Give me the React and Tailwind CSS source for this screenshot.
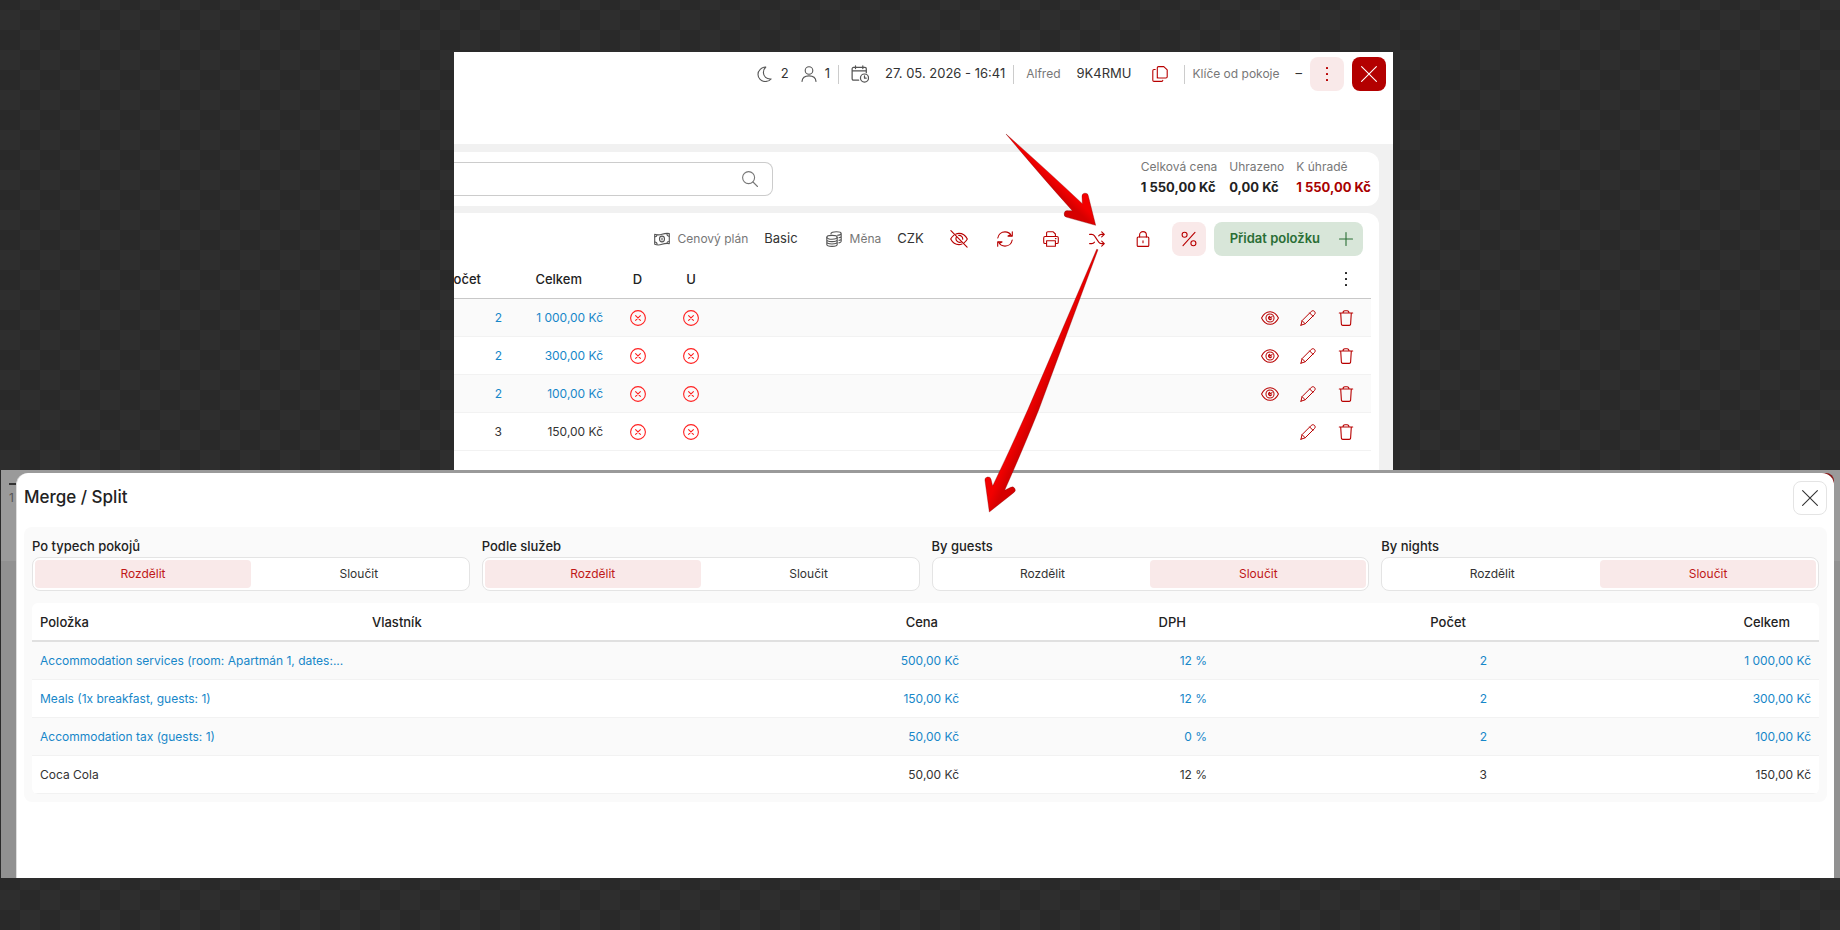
import React, { useState } from 'react';

const Icon = ({ size = 16, className = '', width = 1.1, children }) => (
  <svg
    width={size}
    height={size}
    viewBox="0 0 16 16"
    fill="none"
    stroke="currentColor"
    strokeWidth={width}
    strokeLinecap="round"
    strokeLinejoin="round"
    className={`shrink-0 ${className}`}
    aria-hidden="true"
  >
    {children}
  </svg>
);

const MoonIcon = () => (
  <Icon className="text-[#555]">
    <path d="M8.8 1C4.4 1.3 1 4.4 1 8.4c0 4 3.2 7.1 7.1 7.1 2.5 0 4.7-.8 6-2.5C9.500 13.400 6.400 10.600 6.400 6.600 6.400 4.300 7.300 2.300 8.800 1Z" />
  </Icon>
);

const UserIcon = () => (
  <Icon className="text-[#555]">
    <circle cx="8" cy="4.500" r="3.800" />
    <path d="M1 15.400C1.300 11.600 4 9.900 8 9.900s6.700 1.700 7 5.500" />
  </Icon>
);

const CalendarIcon = () => (
  <Icon size={18} className="text-[#555]">
    <path d="M4 .8v2.400M10.500 .8v2.400M6.800 13.500H2.200C1.500 13.500 1 13 1 12.300V3.400c0-.7.5-1.200 1.200-1.200h10.200c.7 0 1.200.5 1.200 1.200v3.400M1 5.300h12.600" />
    <circle cx="12" cy="11.600" r="3.600" />
    <path d="M12 9.700v2h1.500" />
  </Icon>
);

const CopyIcon = () => (
  <Icon>
    <path d="M5.300 12V1.800C5.300 1.100 5.900.6 6.500.6h5.300l3.400 3.300V10.800c0 .7-.5 1.200-1.200 1.200H6.500C5.900 12 5.300 11.500 5.300 10.800" />
    <path d="M3.200 3.500H2C1.300 3.500.8 4 .8 4.700v9.500c0 .7.5 1.200 1.200 1.200h7.600c.7 0 1.200-.5 1.200-1.200" />
  </Icon>
);

const DotsIcon = () => (
  <Icon>
    <g fill="currentColor" stroke="none">
      <rect x="7" y="1" width="2" height="2" rx=".5" />
      <rect x="7" y="7" width="2" height="2" rx=".5" />
      <rect x="7" y="13" width="2" height="2" rx=".5" />
    </g>
  </Icon>
);

const CloseIcon = () => (
  <Icon>
    <path d="M.6.6l14.800 14.800M15.400.6.6 15.400" />
  </Icon>
);

const SearchIcon = () => (
  <Icon className="text-[#777]">
    <circle cx="6.600" cy="6.600" r="6" />
    <path d="m11 11 4.500 4.500" />
  </Icon>
);

const MoneyIcon = () => (
  <Icon className="text-[#555]">
    <path d="M.7 3.300c2.700.9 4.900.8 7.300 0s4.600-1.300 7.300-.7v10c-2.700-.6-4.900-.1-7.300.7s-4.600 1-7.300 0v-10Z" />
    <ellipse cx="8" cy="8" rx="2.500" ry="2.900" />
    <path d="M8 7v2M.8 5.800c1.300.1 2.100-.7 2.200-1.900M15.200 5.200c-1.200.2-2.200-.8-2.300-2.300M.8 11c1.300 0 2.200.9 2.300 2.300M15.200 10.300c-1.200 0-2.200.8-2.300 2" />
  </Icon>
);

const CoinsIcon = () => (
  <Icon className="text-[#555]">
    <ellipse cx="6" cy="6.300" rx="5.200" ry="1.900" />
    <path d="M.8 6.300v7.200c0 1 2.300 1.900 5.200 1.900s5.200-.9 5.200-1.900V6.300M.8 8.700c0 1 2.300 1.900 5.200 1.900s5.200-.9 5.200-1.900M.8 11.100c0 1 2.300 1.900 5.200 1.900s5.200-.9 5.200-1.900M5 2.600C5 1.500 7.300.7 10.200.7s5 .8 5 1.800v7.700c0 .8-1 1.400-2.300 1.700M5 2.600v.4M11.500 4.300c1.900-.2 3.400-.8 3.700-1.800M13 6.800c1.300-.3 2.200-.8 2.200-1.500M13 9.400c1.300-.3 2.200-.8 2.200-1.500" />
  </Icon>
);

const EyeOffIcon = () => (
  <Icon size={18} width={1}>
    <path d="M.8.6l14.400 14.600M5.300 3.600C6.100 3.200 7 3 8 3c3.600 0 6.200 2.700 7.400 5-.6 1.100-1.500 2.300-2.700 3.200M10.600 12.500c-.8.300-1.700.5-2.600.5-3.600 0-6.200-2.700-7.400-5 .6-1.100 1.500-2.300 2.700-3.200M6 5.800a3.200 3.200 0 0 0 4.300 4.600M7.800 4.800a3.200 3.200 0 0 1 3.500 3.400" />
  </Icon>
);

const RefreshIcon = () => (
  <Icon>
    <path d="M.8 7C1.300 3.400 4.300.9 8 .9c2.800 0 5.200 1.500 6.400 3.800M15.200 9c-.5 3.600-3.500 6.100-7.200 6.100-2.800 0-5.200-1.500-6.400-3.800" />
    <path d="M15.300.8v4.300H11l2.400-1.300M.7 15.200v-4.300H5l-2.400 1.300" />
  </Icon>
);

const PrinterIcon = () => (
  <Icon>
    <path d="M3.600 5.500V2c0-.7.500-1.200 1.200-1.200h5.400L12.400 3v2.500M3.600 12.500H2c-.7 0-1.300-.5-1.300-1.300V6.900c0-.8.600-1.400 1.300-1.400h12c.7 0 1.300.6 1.300 1.400v4.300c0 .8-.6 1.300-1.300 1.300h-1.600M3.600 9.700h8.800v5.600H3.600ZM12.400 7.600h.6" />
  </Icon>
);

const ShuffleIcon = () => (
  <Icon>
    <path d="M.6 3.400h2.100c1.300 0 2.100.5 2.800 1.500l4.200 6.200c.7 1 1.500 1.500 2.800 1.500h2.700M.6 12.600h2.100c1.300 0 2.100-.5 2.800-1.500M9.700 4.900c.7-1 1.500-1.500 2.800-1.500h2.700M12.700.9l2.600 2.500-2.600 2.500M12.700 10.100l2.600 2.500-2.600 2.500" />
  </Icon>
);

const LockIcon = () => (
  <Icon>
    <rect x="2.200" y="6" width="11.600" height="9.400" rx="1" />
    <path d="M4.600 6V4c0-1.900 1.500-3.400 3.400-3.400s3.400 1.500 3.400 3.400v2M8 9.700v2" />
  </Icon>
);

const PercentIcon = () => (
  <Icon>
    <circle cx="3.600" cy="3.800" r="2.500" />
    <circle cx="12.400" cy="12.200" r="2.500" />
    <path d="M14 1.400 2 14.600" />
  </Icon>
);

const PlusIcon = () => (
  <Icon>
    <path d="M8 1.500v13M1.500 8h13" />
  </Icon>
);

const EyeIcon = () => (
  <Icon size={18} width={0.9}>
    <path d="M.5 8C1.900 5 4.700 2.400 8 2.400S14.100 5 15.500 8c-1.400 3-4.200 5.600-7.500 5.600S1.900 11 .5 8Z" />
    <circle cx="8" cy="8" r="3.600" />
    <path d="M9.800 6.800 7.800 8.200V6.500a1.500 1.500 0 1 0 1.700 2.200" />
  </Icon>
);

const PencilIcon = () => (
  <Icon width={1}>
    <path d="M1 15.200l1-4.500L11.300 1.400c.9-.9 2.300-.9 3.200 0 .9.900.9 2.200 0 3.100L5.200 13.800 1 15.200ZM9.700 3l3.200 3.200M2.200 10.800l3 3" />
  </Icon>
);

const TrashIcon = () => (
  <Icon>
    <path d="M1.300 3h13.400M5 3c0-1.400.8-2.300 1.900-2.300h2.200C10.200.7 11 1.600 11 3M2.700 3l.7 11.200c.1.700.6 1.200 1.300 1.200h6.600c.7 0 1.200-.5 1.300-1.200L13.300 3" />
  </Icon>
);

const CrossCircleIcon = () => (
  <Icon className="mx-auto text-[#ff2020]">
    <circle cx="8" cy="8" r="7.400" />
    <path d="m5.600 5.600 4.800 4.800M10.400 5.600l-4.800 4.800" />
  </Icon>
);

const IconButton = ({ label, className = '', children }) => (
  <button
    aria-label={label}
    className={`flex size-[34px] shrink-0 items-center justify-center rounded-lg ${className}`}
  >
    {children}
  </button>
);

const items = [
  { name: 'Accommodation services (room: Apartmán 1, dates:...', price: '500,00 Kč', vat: '12 %', count: 2, total: '1 000,00 Kč', system: true },
  { name: 'Meals (1x breakfast, guests: 1)', price: '150,00 Kč', vat: '12 %', count: 2, total: '300,00 Kč', system: true },
  { name: 'Accommodation tax (guests: 1)', price: '50,00 Kč', vat: '0 %', count: 2, total: '100,00 Kč', system: true },
  { name: 'Coca Cola', price: '50,00 Kč', vat: '12 %', count: 3, total: '150,00 Kč', system: false },
];

const totals = [
  { label: 'Celková cena', value: '1 550,00 Kč', color: 'text-[#222]' },
  { label: 'Uhrazeno', value: '0,00 Kč', color: 'text-[#222]' },
  { label: 'K úhradě', value: '1 550,00 Kč', color: 'text-[#a80000]' },
];

const Divider = () => <span className="h-[19px] w-px bg-[#ccc]" />;

const ReservationHeader = () => (
  <header className="flex h-[92px] items-start justify-end bg-white pt-[5px] pr-[7px]">
    <div className="flex h-[34px] items-center text-[13px] text-[#333]">
      <MoonIcon />
      <span className="ml-2">2</span>
      <span className="ml-3 flex items-center gap-2"><UserIcon />1</span>
      <span className="ml-2 flex"><Divider /></span>
      <span className="ml-3 flex items-center gap-4"><CalendarIcon />27. 05. 2026 - 16:41</span>
      <span className="ml-2 flex"><Divider /></span>
      <span className="ml-3 text-xs text-[#777]">Alfred</span>
      <span className="ml-4">9K4RMU</span>
      <button aria-label="Kopírovat" className="mr-4 ml-5 text-[#b80000]"><CopyIcon /></button>
      <Divider />
      <span className="ml-2 text-xs text-[#777]">Klíče od pokoje</span>
      <span className="mr-2 ml-4">–</span>
    </div>
    <IconButton label="Více" className="bg-[#f9e9e9] text-[#b80000]"><DotsIcon /></IconButton>
    <IconButton label="Zavřít" className="ml-2 bg-[#b30000] text-white"><CloseIcon /></IconButton>
  </header>
);

const SummaryBar = () => (
  <div className="flex h-[54px] items-start justify-between rounded-r-xl bg-white pr-2">
    <label className="mt-[10px] flex h-[34px] w-[319px] items-center rounded-r-lg border border-l-0 border-[#ccc] pr-[14px]">
      <input type="search" aria-label="Hledat" className="min-w-0 flex-1 bg-transparent text-[13px] outline-none" />
      <SearchIcon />
    </label>
    <dl className="mt-[5px] flex gap-3">
      {totals.map((total) => (
        <div key={total.label}>
          <dt className="text-xs leading-5 text-[#777]">{total.label}</dt>
          <dd className={`text-[13px] leading-5 font-bold ${total.color}`}>{total.value}</dd>
        </div>
      ))}
    </dl>
  </div>
);

const Toolbar = () => (
  <div className="flex items-center justify-end pr-4 text-[13px] text-[#333]">
    <MoneyIcon />
    <span className="ml-2 text-xs text-[#777]">Cenový plán</span>
    <span className="ml-4">Basic</span>
    <span className="ml-7 flex"><CoinsIcon /></span>
    <span className="ml-2 text-xs text-[#777]">Měna</span>
    <span className="ml-4">CZK</span>
    <div className="ml-[18px] flex gap-3 text-[#b80000]">
      <IconButton label="Skrýt"><EyeOffIcon /></IconButton>
      <IconButton label="Obnovit"><RefreshIcon /></IconButton>
      <IconButton label="Tisk"><PrinterIcon /></IconButton>
      <IconButton label="Sloučit / rozdělit"><ShuffleIcon /></IconButton>
      <IconButton label="Zamknout"><LockIcon /></IconButton>
      <IconButton label="Sleva" className="bg-[#f9e9e9]"><PercentIcon /></IconButton>
    </div>
    <button className="ml-2 flex h-[34px] items-center gap-[18px] rounded-lg bg-[#d8e6d9] pr-[9px] pl-4 font-semibold text-[#2a6e35]">
      Přidat položku
      <PlusIcon />
    </button>
  </div>
);

const ItemsTable = () => (
  <div className="mt-[5px] -ml-4 pr-2">
    <table className="w-full table-fixed text-xs">
      <thead>
        <tr className="h-[37px] border-b border-[#c8c8c8] text-[13px] text-[#222]">
          <th className="w-[72px] pr-[29px] text-right font-medium">Počet</th>
          <th className="w-[101px] pr-[29px] text-right font-medium">Celkem</th>
          <th className="w-[53px] font-medium">D</th>
          <th className="w-[54px] font-medium">U</th>
          <th className="pr-[6px]">
            <button aria-label="Sloupce" className="ml-auto flex w-[38px] justify-center"><DotsIcon /></button>
          </th>
        </tr>
      </thead>
      <tbody>
        {items.map((item) => (
          <tr
            key={item.name}
            className={`h-[38px] border-b border-[#f2f2f2] odd:bg-[#fafafa] ${item.system ? 'text-[#1787c9]' : 'text-[#333]'}`}
          >
            <td className="pt-[2px] pr-2 text-right">{item.count}</td>
            <td className="pt-[2px] pr-2 text-right">{item.total}</td>
            <td className="pt-[2px]"><CrossCircleIcon /></td>
            <td className="pt-[2px]"><CrossCircleIcon /></td>
            <td className="pt-[2px] pr-[6px]">
              <div className="flex justify-end text-[#b80000]">
                {item.system && (
                  <button aria-label="Zobrazit" className="flex w-[38px] items-center justify-center"><EyeIcon /></button>
                )}
                <button aria-label="Upravit" className="flex w-[38px] items-center justify-center"><PencilIcon /></button>
                <button aria-label="Smazat" className="flex w-[38px] items-center justify-center"><TrashIcon /></button>
              </div>
            </td>
          </tr>
        ))}
      </tbody>
    </table>
  </div>
);

// Two hand-drawn arrows: one to the shuffle button, one from it to the dialog
const Arrows = () => (
  <svg
    className="pointer-events-none absolute top-[68px] right-[283px] z-20"
    width="130"
    height="400"
    viewBox="-60 0 390 1200"
    aria-hidden="true"
  >
    <defs>
      <linearGradient id="arrowDown" gradientUnits="userSpaceOnUse" x1="205" y1="285" x2="256" y2="230">
        <stop offset="0.350" stopColor="#d60000" />
        <stop offset="0.650" stopColor="#f20000" />
      </linearGradient>
      <linearGradient id="arrowLong" gradientUnits="userSpaceOnUse" x1="-40" y1="1078" x2="40" y2="1112">
        <stop offset="0.350" stopColor="#f20000" />
        <stop offset="0.650" stopColor="#d60000" />
      </linearGradient>
    </defs>
    <g stroke="#7d0000" strokeWidth="1" strokeLinejoin="round">
      <path
        fill="url(#arrowDown)"
        d="M18 42 Q125 170 217 272 L204 272 A10 10 0 0 0 201 292 L287 316 L265 228 A9 9 0 0 0 246 230 L247 251 Q140 150 18 42Z"
      />
      <path
        fill="url(#arrowLong)"
        d="M290 388 L84 868 Q30 990 -22 1098 L-27 1078 A9 9 0 0 0 -45 1082 L-32 1176 L41 1118 A9 9 0 0 0 32 1102 L14 1111 Q72 980 116 870 L294 389Z"
      />
    </g>
  </svg>
);

const ReservationWindow = () => (
  <section className="relative mr-[447px] ml-[454px] h-[418px]">
    <div className="h-full overflow-hidden bg-[#f1f1f1]">
      <ReservationHeader />
      <div className="flex flex-col gap-[7px] pt-2 pr-[14px]">
        <SummaryBar />
        <div className="h-[270px] rounded-tr-xl bg-white pt-[9px]">
          <Toolbar />
          <ItemsTable />
        </div>
      </div>
    </div>
    <Arrows />
  </section>
);

const SplitToggle = ({ id, label, initial }) => {
  const [value, setValue] = useState(initial);

  return (
    <div role="group" aria-labelledby={id}>
      <div id={id} className="text-[13px] leading-[22px] font-medium text-[#222]">{label}</div>
      <div className="flex h-[34px] rounded-lg border border-[#e4e4e4] bg-white p-[2px] text-xs">
        {['Rozdělit', 'Sloučit'].map((option) => (
          <button
            key={option}
            aria-pressed={value === option}
            onClick={() => setValue(option)}
            className={`flex-1 rounded ${value === option ? 'bg-[#f9e9e9] text-[#c01818]' : 'text-[#333]'}`}
          >
            {option}
          </button>
        ))}
      </div>
    </div>
  );
};

const MergeTable = () => (
  <div className="mt-3 overflow-hidden rounded-md bg-white">
    <table className="w-full table-fixed text-xs">
      <thead>
        <tr className="h-[38px] border-b-2 border-[#e0e0e0] text-[13px] text-[#222]">
          <th className="w-[332px] pt-[2px] pl-2 text-left font-medium">Položka</th>
          <th className="w-[332px] pt-[2px] pl-2 text-left font-medium">Vlastník</th>
          <th className="pt-[2px] pr-[29px] text-right font-medium">Cena</th>
          <th className="w-[248px] pt-[2px] pr-[29px] text-right font-medium">DPH</th>
          <th className="w-[280px] pt-[2px] pr-[29px] text-right font-medium">Počet</th>
          <th className="w-[324px] pt-[2px] pr-[29px] text-right font-medium">Celkem</th>
        </tr>
      </thead>
      <tbody>
        {items.map((item) => (
          <tr
            key={item.name}
            className={`h-[38px] border-b border-[#f2f2f2] odd:bg-[#fafafa] ${item.system ? 'text-[#1787c9]' : 'text-[#333]'}`}
          >
            <td className="truncate px-2 pt-[2px]">{item.name}</td>
            <td />
            <td className="pt-[2px] pr-2 text-right">{item.price}</td>
            <td className="pt-[2px] pr-2 text-right">{item.vat}</td>
            <td className="pt-[2px] pr-2 text-right">{item.count}</td>
            <td className="pt-[2px] pr-2 text-right">{item.total}</td>
          </tr>
        ))}
      </tbody>
    </table>
  </div>
);

const MergeDialog = () => (
  <section className="relative ml-px h-[408px] overflow-hidden bg-[linear-gradient(#9a9a9a_91px,#919191_91px)] pt-[3px] pr-[6px] pl-[15px]">
    {/* What still shows of the dimmed page behind the dialog */}
    <div className="absolute top-[13px] left-2 h-[2px] w-4 bg-[#333]" />
    <span className="absolute top-[20px] left-2 text-xs text-[#555]">1</span>
    <div className="absolute top-[3px] right-[6px] size-[34px] rounded-lg bg-[#861414]" />
    <div role="dialog" aria-labelledby="merge-title" className="relative h-full rounded-t-xl border-l border-[#ddd] bg-white px-[7px] pt-[7px]">
      <div className="flex h-[35px] items-center justify-between">
        <h2 id="merge-title" className="text-[17px] font-medium text-[#222]">Merge / Split</h2>
        <IconButton label="Zavřít" className="border border-[#e4e4e4] text-[#333]"><CloseIcon /></IconButton>
      </div>
      <div className="mt-3 rounded-lg bg-[#fafafa] p-2">
        <div className="grid grid-cols-4 gap-3">
          <SplitToggle id="by-room" label="Po typech pokojů" initial="Rozdělit" />
          <SplitToggle id="by-service" label="Podle služeb" initial="Rozdělit" />
          <SplitToggle id="by-guest" label="By guests" initial="Sloučit" />
          <SplitToggle id="by-night" label="By nights" initial="Sloučit" />
        </div>
        <MergeTable />
      </div>
    </div>
  </section>
);

export default function App() {
  return (
    <main className="min-h-screen bg-[#292929] bg-[conic-gradient(#292929_25%,#2e2e2e_25%_50%,#292929_50%_75%,#2e2e2e_75%)] bg-[length:40px_40px] bg-[position:0_10px] pt-[52px] font-['Inter',sans-serif]">
      <ReservationWindow />
      <MergeDialog />
    </main>
  );
}
